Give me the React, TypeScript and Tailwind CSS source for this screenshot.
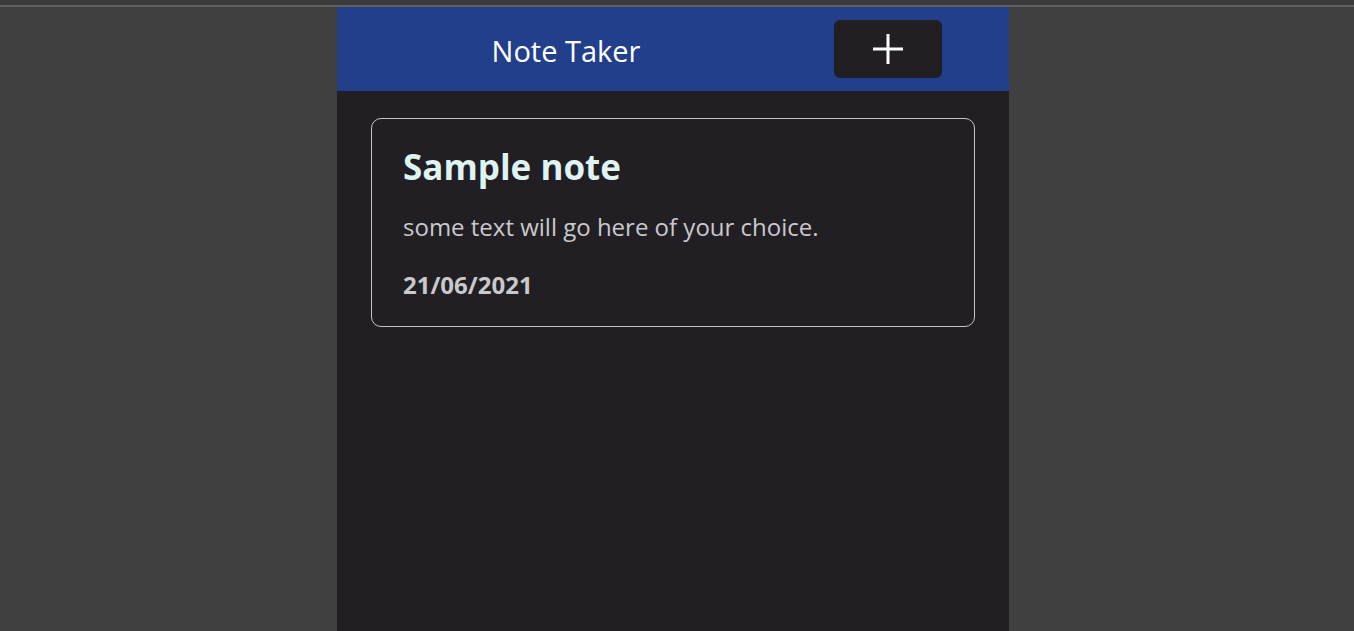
function App() {
  return (
    <div className="min-h-screen bg-[#404040] pr-[8px] font-['Open_Sans','Noto_Sans',sans-serif]">
      <div className="h-[5px] bg-[#3a3a3a] -mr-[8px]" />
      <div className="h-[2px] bg-[#5e5e5e] -mr-[8px]" />
      <div className="mx-auto w-[672px] min-h-[624px] bg-[#221f24]">
        <header className="h-[84px] bg-[#223f8c] flex items-center">
          <h1 className="w-[458px] text-center text-[29px] text-white mt-[3px]">Note Taker</h1>
          <button className="ml-auto w-[108px] h-[58px] mr-[67px] mt-[-1px] rounded-md bg-[#221f24] flex items-center justify-center">
            <svg width="32" height="32" viewBox="0 0 32 32">
              <path d="M16 1v30M1 16h30" stroke="white" strokeWidth="3" />
            </svg>
          </button>
        </header>
        <div className="px-[34px] pt-[27px]">
          <div className="border border-[#c4c4c4] rounded-[10px] px-[31px] pt-[24px] h-[209px]">
            <h2 className="text-[35px] font-bold text-[#dff3f2] leading-[48px]">Sample note</h2>
            <p className="mt-[20px] text-[24px] text-[#c9c9cc] leading-[32px]">some text will go here of your choice.</p>
            <p className="mt-[26px] text-[24px] font-bold text-[#c9c9cc] leading-[32px]">21/06/2021</p>
          </div>
        </div>
      </div>
    </div>
  );
}

export default App;
